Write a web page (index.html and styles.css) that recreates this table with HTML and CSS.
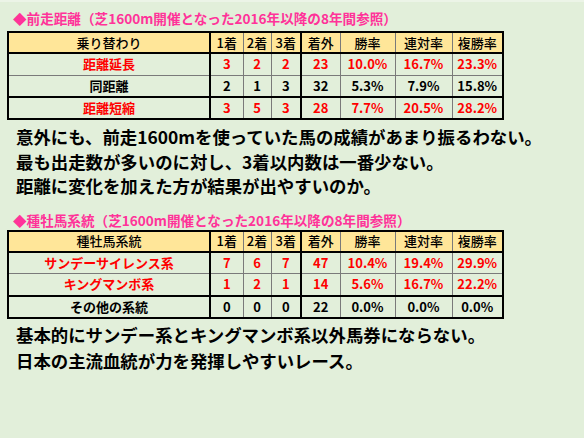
FILE: index.html
```html
<!DOCTYPE html>
<html lang="ja">
  <head>
    <meta charset="UTF-8" />
    <meta name="viewport" content="width=device-width, initial-scale=1.0" />
    <title>芝1600m 傾向</title>
    <link rel="stylesheet" href="styles.css">
  </head>
  <body>
    <div class="sheet">
      <h2 class="title">◆前走距離（芝1600m開催となった2016年以降の8年間参照）</h2>
      <table class="stats stats-distance">
        <colgroup>
          <col class="c-name" /><col class="c-1" /><col class="c-2" /><col class="c-3" />
          <col class="c-out" /><col class="c-win" /><col class="c-ren" /><col class="c-fuku" />
        </colgroup>
        <thead>
          <tr>
            <th class="sep">乗り替わり</th><th>1着</th><th>2着</th><th class="sep">3着</th>
            <th>着外</th><th>勝率</th><th>連対率</th><th>複勝率</th>
          </tr>
        </thead>
        <tbody>
          <tr class="hot">
            <td class="sep">距離延長</td><td>3</td><td>2</td><td class="sep">2</td>
            <td>23</td><td>10.0%</td><td>16.7%</td><td>23.3%</td>
          </tr>
          <tr class="dark">
            <td class="sep">同距離</td><td>2</td><td>1</td><td class="sep">3</td>
            <td>32</td><td>5.3%</td><td>7.9%</td><td>15.8%</td>
          </tr>
          <tr class="hot">
            <td class="sep">距離短縮</td><td>3</td><td>5</td><td class="sep">3</td>
            <td>28</td><td>7.7%</td><td>20.5%</td><td>28.2%</td>
          </tr>
        </tbody>
      </table>
      <div class="note note-first">
        <p>意外にも、前走1600mを使っていた馬の成績があまり振るわない。</p>
        <p>最も出走数が多いのに対し、3着以内数は一番少ない。</p>
        <p>距離に変化を加えた方が結果が出やすいのか。</p>
      </div>

      <h2 class="title title-second">◆種牡馬系統（芝1600m開催となった2016年以降の8年間参照）</h2>
      <table class="stats stats-sire">
        <colgroup>
          <col class="c-name" /><col class="c-1" /><col class="c-2" /><col class="c-3" />
          <col class="c-out" /><col class="c-win" /><col class="c-ren" /><col class="c-fuku" />
        </colgroup>
        <thead>
          <tr>
            <th class="sep">種牡馬系統</th><th>1着</th><th>2着</th><th class="sep">3着</th>
            <th>着外</th><th>勝率</th><th>連対率</th><th>複勝率</th>
          </tr>
        </thead>
        <tbody>
          <tr class="hot">
            <td class="sep">サンデーサイレンス系</td><td>7</td><td>6</td><td class="sep">7</td>
            <td>47</td><td>10.4%</td><td>19.4%</td><td>29.9%</td>
          </tr>
          <tr class="hot dark">
            <td class="sep">キングマンボ系</td><td>1</td><td>2</td><td class="sep">1</td>
            <td>14</td><td>5.6%</td><td>16.7%</td><td>22.2%</td>
          </tr>
          <tr>
            <td class="sep">その他の系統</td><td>0</td><td>0</td><td class="sep">0</td>
            <td>22</td><td>0.0%</td><td>0.0%</td><td>0.0%</td>
          </tr>
        </tbody>
      </table>
      <div class="note note-second">
        <p>基本的にサンデー系とキングマンボ系以外馬券にならない。</p>
        <p>日本の主流血統が力を発揮しやすいレース。</p>
      </div>
    </div>
  </body>
</html>
```

FILE: styles.css
```css
* {
  margin: 0;
  padding: 0;
  box-sizing: border-box;
}
body {
  background-color: #e2efda;
  font-family: 'Noto Sans CJK JP', 'Noto Sans', sans-serif;
  color: #000;
}
.sheet {
  width: 584px;
  height: 438px;
  padding: 6px 0 0 7px;
  border-top: 2px solid #ecf4e7;
}
.title {
  font-size: 13.6px;
  font-weight: bold;
  color: #ff3399;
  line-height: 20px;
  padding-left: 6px;
  margin-bottom: 3px;
  white-space: nowrap;
}
.title-second {
  margin-top: 11px;
  margin-bottom: 0;
}
.stats {
  border-collapse: collapse;
  table-layout: fixed;
  width: 495px;
  border: 2px solid #000;
  font-size: 13px;
  font-weight: bold;
}
.c-name { width: 202px; }
.c-1 { width: 33px; }
.c-2 { width: 28px; }
.c-3 { width: 30px; }
.c-out { width: 39px; }
.c-win { width: 55px; }
.c-ren { width: 57px; }
.c-fuku { width: 51px; }
.stats th,
.stats td {
  border: 1px solid #7a7a7a;
  text-align: center;
  padding: 0;
  line-height: 18px;
  white-space: nowrap;
}
.stats th {
  background-color: #ffe699;
  font-weight: 500;
  height: 21px;
  border-bottom: 2px solid #000;
}
.stats td {
  height: 22px;
}
.stats .sep {
  border-right: 2px solid #000;
}
.stats tr.dark td {
  border-bottom: 2px solid #000;
}
.hot td {
  color: #ff0000;
}
.note {
  font-size: 17.4px;
  font-weight: bold;
  padding-left: 9px;
  white-space: nowrap;
}
.note-first {
  margin-top: 5px;
  line-height: 24.5px;
}
.note-second {
  margin-top: 3px;
  line-height: 26px;
}
```
